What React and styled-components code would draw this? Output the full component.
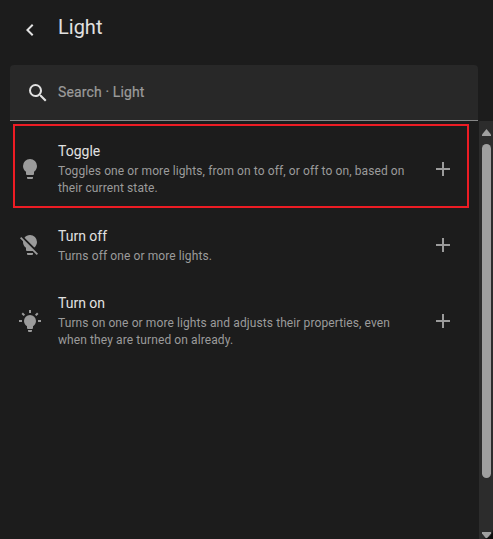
import React from "react";
import styled, { createGlobalStyle } from "styled-components";

const GlobalStyle = createGlobalStyle`
  * { box-sizing: border-box; }
  body { margin: 0; background: #1c1c1c; overflow: hidden; }
`;

const Dialog = styled.main`
  display: flex;
  flex-direction: column;
  width: 493px;
  height: 539px;
  background: #1c1c1c;
  border-bottom-right-radius: 10px;
  color: #e1e1e1;
  font-family: Roboto, sans-serif;
  overflow: hidden;
`;

const Backdrop = styled.div`
  background: #0b0b0b;
`;

const Header = styled.header`
  display: flex;
  flex: none;
  align-items: center;
  gap: 16px;
  height: 65px;
  padding: 0 18px 7px;
`;

const BackButton = styled.button`
  display: flex;
  padding: 0;
  margin-top: 1px;
  border: 0;
  background: none;
  color: #e1e1e1;
`;

const Title = styled.h1`
  margin: -5px 0 0;
  font-size: 20px;
  font-weight: 400;
  line-height: 28px;
`;

const SearchField = styled.label`
  display: flex;
  flex: none;
  align-items: center;
  gap: 8px;
  width: 468px;
  height: 56px;
  margin-left: 10px;
  padding: 0 16px;
  border-bottom: 1px solid #878787;
  border-radius: 4px 4px 0 0;
  background: #282828;
`;

const SearchLabel = styled.span`
  margin-top: -2px;
  font-size: 14px;
  line-height: 20px;
  letter-spacing: 0.13px;
  color: #9b9b9b;
  -webkit-text-stroke: 0.2px #9b9b9b;
`;

const Content = styled.section`
  display: flex;
  flex: 1;
  min-height: 0;
`;

const List = styled.ul`
  flex: 1;
  margin: 0;
  padding: 3px 10px 0 13px;
  list-style: none;
`;

const Row = styled.li`
  display: flex;
  align-items: center;
  height: ${(p) => p.$height}px;
  margin-bottom: ${(p) => p.$gap || 0}px;
  padding: 0 ${(p) => (p.$outlined ? 12 : 14)}px 0 ${(p) => (p.$outlined ? 3 : 5)}px;
  ${(p) => p.$outlined && "border: 2px solid #ed1c24; padding-top: 6px;"}
  color: #9b9b9b;
`;

const RowText = styled.div`
  flex: 1;
  margin-left: 16px;
`;

const RowTitle = styled.div`
  margin-top: -1px;
  padding-bottom: 1px;
  font-size: 14px;
  line-height: 21px;
  color: #e1e1e1;
`;

const RowDetail = styled.div`
  font-size: 12px;
  line-height: 17px;
  letter-spacing: 0.1px;
  white-space: pre-line;
`;

const Glyph = styled.svg`
  display: block;
  flex: none;
  width: 24px;
  height: 24px;
  margin-bottom: ${(p) => p.$lift || 0}px;
  fill: currentColor;
`;

const ScrollTrack = styled.div`
  display: flex;
  flex-direction: column;
  align-items: flex-start;
  width: 14px;
  padding-left: 3px;
  background: #2c2c2c;
  color: #9f9f9f;
`;

const ScrollArrow = styled.svg`
  display: block;
  flex: none;
  width: 9px;
  height: 7px;
  margin-top: ${(p) => p.$top}px;
  fill: currentColor;
`;

const ScrollThumb = styled.div`
  flex: none;
  width: 9px;
  height: 334px;
  margin-top: 8px;
  border-radius: 5px;
  background: currentColor;
`;

const paths = {
  back: "M15.41,16.58L10.83,12L15.41,7.41L14,6L8,12L14,18L15.41,16.58Z",
  search:
    "M9.5,3A6.5,6.5 0 0,1 16,9.5C16,11.11 15.41,12.59 14.44,13.73L14.71,14H15.5L20.5,19L19,20.5L14,15.5V14.71L13.73,14.44C12.59,15.41 11.11,16 9.5,16A6.5,6.5 0 0,1 3,9.5A6.5,6.5 0 0,1 9.5,3M9.5,5C7,5 5,7 5,9.5C5,12 7,14 9.5,14C12,14 14,12 14,9.5C14,7 12,5 9.5,5Z",
  plus: "M19,13H13V19H11V13H5V11H11V5H13V11H19V13Z",
  bulb:
    "M12,2A7,7 0 0,0 5,9C5,11.38 6.19,13.47 8,14.74V17A1,1 0 0,0 9,18H15A1,1 0 0,0 16,17V14.74C17.81,13.47 19,11.38 19,9A7,7 0 0,0 12,2M9,21A1,1 0 0,0 10,22H14A1,1 0 0,0 15,21V20H9V21Z",
  bulbOff:
    "M12,2C9.76,2 7.78,3.05 6.5,4.68L16.31,14.5C17.94,13.21 19,11.24 19,9A7,7 0 0,0 12,2M3.28,4L2,5.27L5.04,8.3C5,8.53 5,8.76 5,9C5,11.38 6.19,13.47 8,14.74V17A1,1 0 0,0 9,18H14.73L18.73,22L20,20.72L3.28,4M9,20V21A1,1 0 0,0 10,22H14A1,1 0 0,0 15,21V20H9Z",
  bulbOn:
    "M12,6A6,6 0 0,1 18,12C18,14.22 16.79,16.16 15,17.2V19A1,1 0 0,1 14,20H10A1,1 0 0,1 9,19V17.2C7.21,16.16 6,14.22 6,12A6,6 0 0,1 12,6M14,21V22A1,1 0 0,1 13,23H11A1,1 0 0,1 10,22V21H14M20,11H23V13H20V11M1,11H4V13H1V11M13,1V4H11V1H13M4.92,3.5L7.05,5.64L5.63,7.05L3.5,4.93L4.92,3.5M16.95,5.63L19.07,3.5L20.5,4.93L18.37,7.05L16.95,5.63Z",
};

const actions = [
  {
    icon: "bulb",
    title: "Toggle",
    detail: "Toggles one or more lights, from on to off, or off to on, based on\ntheir current state.",
    height: 84,
    gap: 4,
    outlined: true,
  },
  {
    icon: "bulbOff",
    title: "Turn off",
    detail: "Turns off one or more lights.",
    height: 67,
    lift: 1,
  },
  {
    icon: "bulbOn",
    title: "Turn on",
    detail: "Turns on one or more lights and adjusts their properties, even\nwhen they are turned on already.",
    height: 85,
    lift: 1,
  },
];

function Icon({ name, lift }) {
  return (
    <Glyph viewBox="0 0 24 24" aria-hidden="true" $lift={lift}>
      <path d={paths[name]} />
    </Glyph>
  );
}

export default function App() {
  return (
    <Backdrop>
      <GlobalStyle />
      <Dialog>
        <Header>
          <BackButton aria-label="Back">
            <Icon name="back" />
          </BackButton>
          <Title>Light</Title>
        </Header>
        <SearchField>
          <Icon name="search" />
          <SearchLabel>Search · Light</SearchLabel>
        </SearchField>
        <Content>
          <List>
            {actions.map((a) => (
              <Row key={a.title} $height={a.height} $gap={a.gap} $outlined={a.outlined}>
                <Icon name={a.icon} lift={a.lift} />
                <RowText>
                  <RowTitle>{a.title}</RowTitle>
                  <RowDetail>{a.detail}</RowDetail>
                </RowText>
                <Icon name="plus" lift={a.lift} />
              </Row>
            ))}
          </List>
          <ScrollTrack>
            <ScrollArrow viewBox="0 0 9 7" $top={8}>
              <path d="M4.5 0L9 5.5V7H0V5.5Z" />
            </ScrollArrow>
            <ScrollThumb />
            <ScrollArrow viewBox="0 0 9 7" $top={54}>
              <path d="M0 0H9V1.5L4.5 7L0 1.5Z" />
            </ScrollArrow>
          </ScrollTrack>
        </Content>
      </Dialog>
    </Backdrop>
  );
}
